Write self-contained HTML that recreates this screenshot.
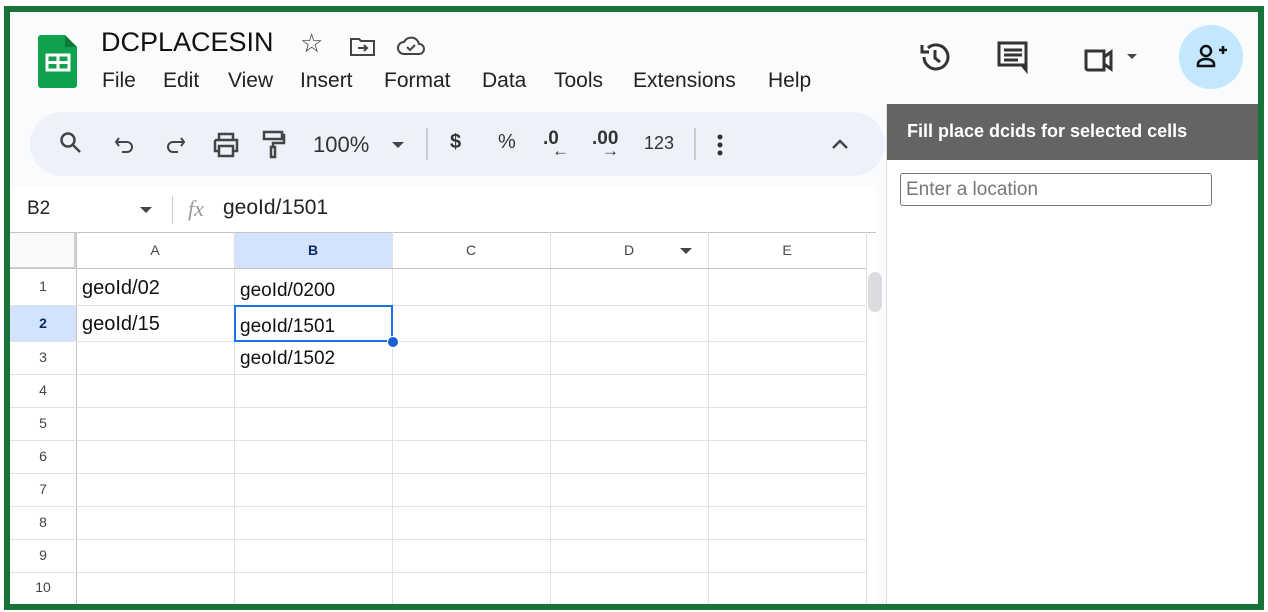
<!DOCTYPE html>
<html><head><meta charset="utf-8"><style>
*{margin:0;padding:0;box-sizing:border-box}
body{width:1268px;height:612px;background:#fff;position:relative;overflow:hidden;font-family:"Liberation Sans",Arial,sans-serif}
.a{position:absolute}
.frame{left:4px;top:6px;width:1260px;height:604px;border:6px solid #18733a;background:#f9fbfd;overflow:hidden}
.hl{position:absolute;height:1px;background:#e1e1e1}
.vl{position:absolute;width:1px;background:#e1e1e1}
.rn{position:absolute;left:0;width:66px;text-align:center;font-size:14px;color:#444}
.ch{position:absolute;top:0;height:36px;line-height:36px;text-align:center;font-size:14px;color:#444}
.ct{position:absolute;font-size:20px;color:#111}
.ic{position:absolute;fill:none;stroke:#444;stroke-width:2}
</style></head><body>
<div class="a frame">
 <svg class="a" style="left:28px;top:23px" width="40" height="54" viewBox="0 0 40 54"><path d="M3 0h24l12 12v38a3 3 0 0 1-3 3H3a3 3 0 0 1-3-3V3a3 3 0 0 1 3-3z" fill="#0fa14c"/><path d="M27 0v12h12z" fill="#0a7a38"/><rect x="9" y="20" width="22" height="15" fill="none" stroke="#fff" stroke-width="3"/><path d="M9 27.5h22M20 20v15" stroke="#fff" stroke-width="3"/></svg>
 <div class="a" style="left:91px;top:15px;font-size:27px;color:#111">DCPLACESIN</div>
 <div class="a" style="left:290px;top:16px;font-size:26px;color:#333">☆</div>
 <svg class="ic" style="left:339px;top:24px" width="28" height="22" viewBox="0 0 28 22"><path d="M2 3h8l2 2h13v14H2z"/><path d="M9 12h9M15 9l3 3-3 3"/></svg>
 <svg class="ic" style="left:386px;top:22px" width="30" height="24" viewBox="0 0 30 24"><path d="M8 20h15a5 5 0 0 0 0-10 8 8 0 0 0-15-2 6 6 0 0 0 0 12z"/><path d="M11 13l3 3 5-5"/></svg>
 <div class="a" style="left:92px;top:57px;font-size:21px;color:#222">
  <span style="position:absolute;left:0">File</span><span style="position:absolute;left:61px">Edit</span><span style="position:absolute;left:126px">View</span><span style="position:absolute;left:198px">Insert</span><span style="position:absolute;left:282px">Format</span><span style="position:absolute;left:380px">Data</span><span style="position:absolute;left:452px">Tools</span><span style="position:absolute;left:531px">Extensions</span><span style="position:absolute;left:666px;white-space:nowrap">Help</span>
 </div>
 <svg class="ic" style="left:908px;top:28px;stroke:#333;stroke-width:3" width="34" height="34" viewBox="0 0 34 34"><path d="M6 17a12 12 0 1 0 4-9"/><path d="M4 5v7h7"/><path d="M17 10v8l5 4"/></svg>
 <svg class="ic" style="left:986px;top:28px;stroke:#333;stroke-width:3" width="34" height="36" viewBox="0 0 34 36"><path d="M3 3h27v22H8l-5 0z"/><path d="M26 25l4 5v-5"/><path d="M8 10h18M8 15h18M8 20h14"/></svg>
 <svg class="ic" style="left:1072px;top:36px;stroke:#333;stroke-width:3" width="36" height="26" viewBox="0 0 36 26"><path d="M4 3h18v19H6a2 2 0 0 1-2-2z"/><path d="M22 9l7-5v17l-7-5"/></svg>
 <div class="a" style="left:1117px;top:42px;width:0;height:0;border-left:5px solid transparent;border-right:5px solid transparent;border-top:5px solid #444"></div>
 <div class="a" style="left:1169px;top:13px;width:64px;height:64px;border-radius:50%;background:#c2e7ff"></div>
 <svg class="ic" style="left:1186px;top:32px;stroke:#111;stroke-width:2.5" width="32" height="26" viewBox="0 0 32 26"><circle cx="10" cy="7" r="5"/><path d="M2 22v-2c0-3 4-5 8-5s8 2 8 5v2z"/><path d="M23 6h8M27 2v8"/></svg>
 <div class="a" style="left:20px;top:100px;width:855px;height:64px;border-radius:32px;background:#edf2fa"></div>
 <svg class="ic" style="left:49px;top:119px;stroke:#444;stroke-width:2.5" width="24" height="24" viewBox="0 0 24 24"><circle cx="9" cy="9" r="6.5"/><path d="M14 14l7 7"/></svg>
 <svg class="ic" style="left:104px;top:122px" width="22" height="22" viewBox="0 0 22 22"><path d="M5 4L2 8l3 4"/><path d="M2 8h11a5 5 0 0 1 0 10H8"/></svg>
 <svg class="ic" style="left:154px;top:122px" width="22" height="22" viewBox="0 0 22 22"><path d="M17 4l3 4-3 4"/><path d="M20 8H9a5 5 0 0 0 0 10h5"/></svg>
 <svg class="ic" style="left:202px;top:120px;stroke-width:2.5" width="28" height="26" viewBox="0 0 28 26"><path d="M7 8V2h14v6"/><path d="M3 8h22v11h-4M7 19H3V8"/><path d="M7 14h14v10H7z"/></svg>
 <svg class="ic" style="left:252px;top:118px;stroke-width:2.5" width="24" height="30" viewBox="0 0 24 30"><path d="M2 2h18v7H2z"/><path d="M20 5h2v8H11v4"/><path d="M9 17h4v10H9z"/></svg>
 <div class="a" style="left:303px;top:120px;font-size:22px;color:#333">100%</div>
 <div class="a" style="left:382px;top:130px;width:0;height:0;border-left:6px solid transparent;border-right:6px solid transparent;border-top:6px solid #444"></div>
 <div class="a" style="left:416px;top:116px;width:2px;height:32px;background:#ccc"></div>
 <div class="a" style="left:440px;top:119px;font-size:20px;color:#333;font-weight:bold">$</div>
 <div class="a" style="left:488px;top:119px;font-size:20px;color:#333">%</div>
 <div class="a" style="left:533px;top:116px;font-size:19px;color:#333;font-weight:bold">.0</div>
 <div class="a" style="left:542px;top:129px;font-size:17px;color:#333;font-weight:bold">←</div>
 <div class="a" style="left:582px;top:116px;font-size:19px;color:#333;font-weight:bold">.00</div>
 <div class="a" style="left:592px;top:129px;font-size:17px;color:#333;font-weight:bold">→</div>
 <div class="a" style="left:634px;top:121px;font-size:18px;color:#333">123</div>
 <div class="a" style="left:684px;top:116px;width:2px;height:32px;background:#ccc"></div>
 <svg class="a" style="left:706px;top:122px" width="8" height="24"><circle cx="4" cy="3" r="2.5" fill="#333"/><circle cx="4" cy="11" r="2.5" fill="#333"/><circle cx="4" cy="19" r="2.5" fill="#333"/></svg>
 <svg class="ic" style="left:820px;top:125px;stroke-width:2.5" width="20" height="14" viewBox="0 0 20 14"><path d="M3 11l7-7 7 7"/></svg>
 <div class="a" style="left:0;top:174px;width:866px;height:46px;background:#fff"></div>
 <div class="a" style="left:17px;top:186px;font-size:19px;color:#222">B2</div>
 <div class="a" style="left:130px;top:195px;width:0;height:0;border-left:6px solid transparent;border-right:6px solid transparent;border-top:6px solid #444"></div>
 <div class="a" style="left:162px;top:184px;width:1px;height:28px;background:#ccc"></div>
 <div class="a" style="left:178px;top:184px;font-size:22px;color:#999;font-family:'Liberation Serif',serif;font-style:italic">fx</div>
 <div class="a" style="left:213px;top:184px;font-size:21px;color:#222">geoId/1501</div>
 <div class="a" style="left:0;top:220px;width:866px;height:400px;background:#fff">
  <div class="a" style="left:0;top:0;width:866px;height:1px;background:#c4c4c4"></div>
  <div class="a" style="left:0;top:1px;width:66px;height:36px;background:#f8f9fa;border-right:2px solid #d0d0d0;border-bottom:2px solid #d0d0d0"></div>
  <div class="a" style="left:224px;top:1px;width:158px;height:36px;background:#d3e3fd"></div>
  <div class="a" style="left:0;top:73px;width:66px;height:36px;background:#d3e3fd"></div>
  <div class="ch" style="left:66px;width:158px">A</div>
  <div class="ch" style="left:224px;width:158px;font-weight:bold;color:#0b2a66">B</div>
  <div class="ch" style="left:382px;width:158px">C</div>
  <div class="ch" style="left:540px;width:158px">D</div>
  <div class="a" style="left:670px;top:16px;width:0;height:0;border-left:6px solid transparent;border-right:6px solid transparent;border-top:6px solid #444"></div>
  <div class="ch" style="left:698px;width:158px">E</div>
  <div class="vl" style="left:66px;top:0;height:400px;background:#c4c4c4"></div>
  <div class="vl" style="left:224px;top:0;height:400px"></div>
  <div class="vl" style="left:382px;top:0;height:400px"></div>
  <div class="vl" style="left:540px;top:0;height:400px"></div>
  <div class="vl" style="left:698px;top:0;height:400px"></div>
  <div class="vl" style="left:856px;top:0;height:400px"></div>
  <div class="hl" style="left:0;top:36px;width:856px;background:#c4c4c4"></div>
  <div class="hl" style="left:0;top:73px;width:856px"></div>
  <div class="hl" style="left:0;top:109px;width:856px"></div>
  <div class="hl" style="left:0;top:142px;width:856px"></div>
  <div class="hl" style="left:0;top:175px;width:856px"></div>
  <div class="hl" style="left:0;top:208px;width:856px"></div>
  <div class="hl" style="left:0;top:241px;width:856px"></div>
  <div class="hl" style="left:0;top:274px;width:856px"></div>
  <div class="hl" style="left:0;top:307px;width:856px"></div>
  <div class="hl" style="left:0;top:340px;width:856px"></div>
  <div class="rn" style="top:46px">1</div>
  <div class="rn" style="top:83px;font-weight:bold;color:#0b2a66">2</div>
  <div class="rn" style="top:117px">3</div>
  <div class="rn" style="top:150px">4</div>
  <div class="rn" style="top:183px">5</div>
  <div class="rn" style="top:216px">6</div>
  <div class="rn" style="top:249px">7</div>
  <div class="rn" style="top:282px">8</div>
  <div class="rn" style="top:315px">9</div>
  <div class="rn" style="top:347px">10</div>
  <div class="ct" style="left:72px;top:45px">geoId/02</div>
  <div class="ct" style="left:72px;top:81px">geoId/15</div>
  <div class="ct" style="left:230px;top:48px;font-size:19px">geoId/0200</div>
  <div class="ct" style="left:230px;top:84px;font-size:19px">geoId/1501</div>
  <div class="ct" style="left:230px;top:116px;font-size:19px">geoId/1502</div>
  <div class="a" style="left:224px;top:73px;width:159px;height:37px;border:2px solid #1a73e8"></div>
  <div class="a" style="left:377px;top:104px;width:12px;height:12px;border-radius:50%;background:#1a5fd6;border:1px solid #fff"></div>
  <div class="a" style="left:858px;top:40px;width:14px;height:40px;border-radius:7px;background:#dadce0"></div>
 </div>
 <div class="a" style="left:876px;top:92px;width:1px;height:520px;background:#dadce0"></div>
 <div class="a" style="left:877px;top:92px;width:380px;height:520px;background:#fff"></div>
 <div class="a" style="left:877px;top:92px;width:380px;height:56px;background:#646464"></div>
 <div class="a" style="left:897px;top:109px;font-size:18px;font-weight:bold;color:#fff">Fill place dcids for selected cells</div>
 <div class="a" style="left:890px;top:161px;width:312px;height:33px;border:1px solid #777;border-radius:3px;background:#fff"></div>
 <div class="a" style="left:896px;top:167px;font-size:19px;color:#777">Enter a location</div>
</div>
</body></html>
